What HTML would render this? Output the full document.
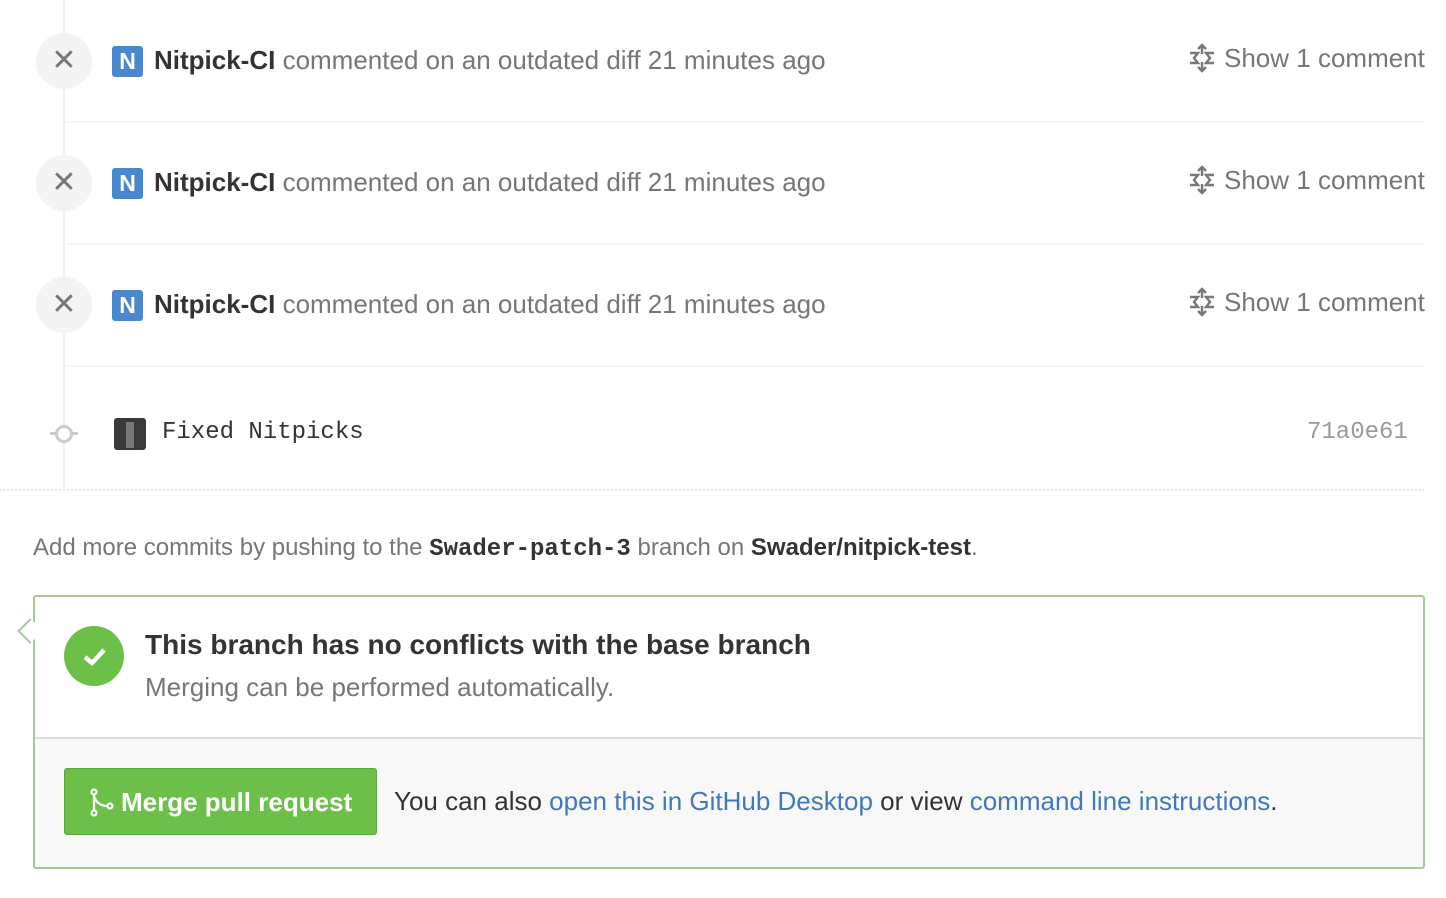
<!DOCTYPE html>
<html><head><meta charset="utf-8"><style>
body{margin:0;width:1446px;height:898px;background:#fff;font-family:"Liberation Sans",sans-serif;position:relative;overflow:hidden}
.a{position:absolute;white-space:nowrap}
.line{position:absolute;left:63px;width:2px;background:#f0f0f0}
.sep{position:absolute;left:64px;width:1360px;height:2px;background:#f4f4f4}
.xc{position:absolute;left:36px;width:56px;height:56px;border-radius:50%;background:#f3f3f3;color:#777;font-size:30px;text-align:center;line-height:56px}
.av{position:absolute;left:112px;width:31px;height:31px;border-radius:3px;background:#4a87cf;color:#fff;font-weight:bold;font-size:23px;text-align:center;line-height:31px}
.t{font-size:26px;color:#767676}
.t b{color:#333}
.sh{font-size:26px;color:#767676;left:1188px}
</style></head><body>
<div class="line" style="top:0;height:490px"></div>
<div class="sep" style="top:121px"></div>
<div class="sep" style="top:243px"></div>
<div class="sep" style="top:365px"></div>
<div style="position:absolute;left:0;top:489px;width:1424px;height:0;border-top:2px dotted #e6e6e6"></div>

<div class="xc" style="top:33px">✕</div>
<div class="av" style="top:46px">N</div>
<div class="a t" style="left:154px;top:45px"><b>Nitpick-CI</b> commented on an outdated diff 21 minutes ago</div>
<div class="a sh" style="top:43px"><svg width="28" height="30" viewBox="0 0 28 30" style="vertical-align:-6px;margin-right:8px"><g fill="none" stroke="#777" stroke-width="2.4"><path d="M14 2v9M10 6l4-4 4 4M14 28v-9M10 24l4 4 4-4M2 10h8l-4 5 4 5H2M26 10h-8l4 5-4 5h8"/></g></svg>Show 1 comment</div>

<div class="xc" style="top:155px">✕</div>
<div class="av" style="top:168px">N</div>
<div class="a t" style="left:154px;top:167px"><b>Nitpick-CI</b> commented on an outdated diff 21 minutes ago</div>
<div class="a sh" style="top:165px"><svg width="28" height="30" viewBox="0 0 28 30" style="vertical-align:-6px;margin-right:8px"><g fill="none" stroke="#777" stroke-width="2.4"><path d="M14 2v9M10 6l4-4 4 4M14 28v-9M10 24l4 4 4-4M2 10h8l-4 5 4 5H2M26 10h-8l4 5-4 5h8"/></g></svg>Show 1 comment</div>

<div class="xc" style="top:277px">✕</div>
<div class="av" style="top:290px">N</div>
<div class="a t" style="left:154px;top:289px"><b>Nitpick-CI</b> commented on an outdated diff 21 minutes ago</div>
<div class="a sh" style="top:287px"><svg width="28" height="30" viewBox="0 0 28 30" style="vertical-align:-6px;margin-right:8px"><g fill="none" stroke="#777" stroke-width="2.4"><path d="M14 2v9M10 6l4-4 4 4M14 28v-9M10 24l4 4 4-4M2 10h8l-4 5 4 5H2M26 10h-8l4 5-4 5h8"/></g></svg>Show 1 comment</div>

<div style="position:absolute;left:50px;top:432px;width:28px;height:3px;background:#ccc"></div>
<div style="position:absolute;left:55px;top:425px;width:12px;height:12px;border:3px solid #ccc;border-radius:50%;background:#fff"></div>
<div style="position:absolute;left:114px;top:418px;width:32px;height:32px;border-radius:3px;background:#3a3a3a"><div style="position:absolute;left:12px;top:4px;width:8px;height:26px;background:#777"></div></div>
<div class="a" style="left:162px;top:419px;font-family:'Liberation Mono',monospace;font-size:24px;color:#333">Fixed Nitpicks</div>
<div class="a" style="left:1307px;top:419px;font-family:'Liberation Mono',monospace;font-size:24px;color:#9a9a9a">71a0e61</div>

<div class="a" style="left:33px;top:534px;font-size:24px;color:#767676">Add more commits by pushing to the <b style="font-family:'Liberation Mono',monospace;color:#333">Swader-patch-3</b> branch on <b style="color:#333">Swader/nitpick-test</b>.</div>

<div style="position:absolute;left:33px;top:595px;width:1388px;height:270px;border:2px solid #a6c79b;border-radius:3px;background:#fff;overflow:hidden">
 <div style="position:absolute;left:0;top:140px;width:100%;height:2px;background:#ddd"></div>
 <div style="position:absolute;left:0;top:142px;width:100%;height:140px;background:#f8f8f8"></div>
</div>
<div style="position:absolute;left:21px;top:622px;width:16px;height:16px;background:#fff;border-left:2px solid #a6c79b;border-bottom:2px solid #a6c79b;transform:rotate(45deg)"></div>
<div style="position:absolute;left:64px;top:626px;width:60px;height:60px;border-radius:50%;background:#6cc04a"><svg width="60" height="60" viewBox="0 0 60 60"><path d="M21 31l7 6 12-13" fill="none" stroke="#fff" stroke-width="4.5"/></svg></div>
<div class="a" style="left:145px;top:629px;font-size:28px;font-weight:bold;color:#333">This branch has no conflicts with the base branch</div>
<div class="a" style="left:145px;top:672px;font-size:26px;color:#767676">Merging can be performed automatically.</div>

<div style="position:absolute;left:64px;top:768px;width:313px;height:67px;background:#6cc04a;border:1px solid #5aa53c;border-radius:3px;color:#fff;font-weight:bold;font-size:26px;line-height:66px;box-sizing:border-box;padding-left:24px"><svg width="26" height="30" viewBox="0 0 26 30" style="vertical-align:-7px;margin-right:6px"><g fill="none" stroke="#fff" stroke-width="2.2"><circle cx="5" cy="4" r="2.5"/><circle cx="5" cy="25" r="2.5"/><circle cx="21" cy="18" r="2.5"/><path d="M5 7v15M5 8c2 8 9 10 13 10"/></g></svg>Merge pull request</div>
<div class="a" style="left:394px;top:786px;font-size:26px;color:#333">You can also <span style="color:#4078c0">open this in GitHub Desktop</span> or view <span style="color:#4078c0">command line instructions</span>.</div>
</body></html>
